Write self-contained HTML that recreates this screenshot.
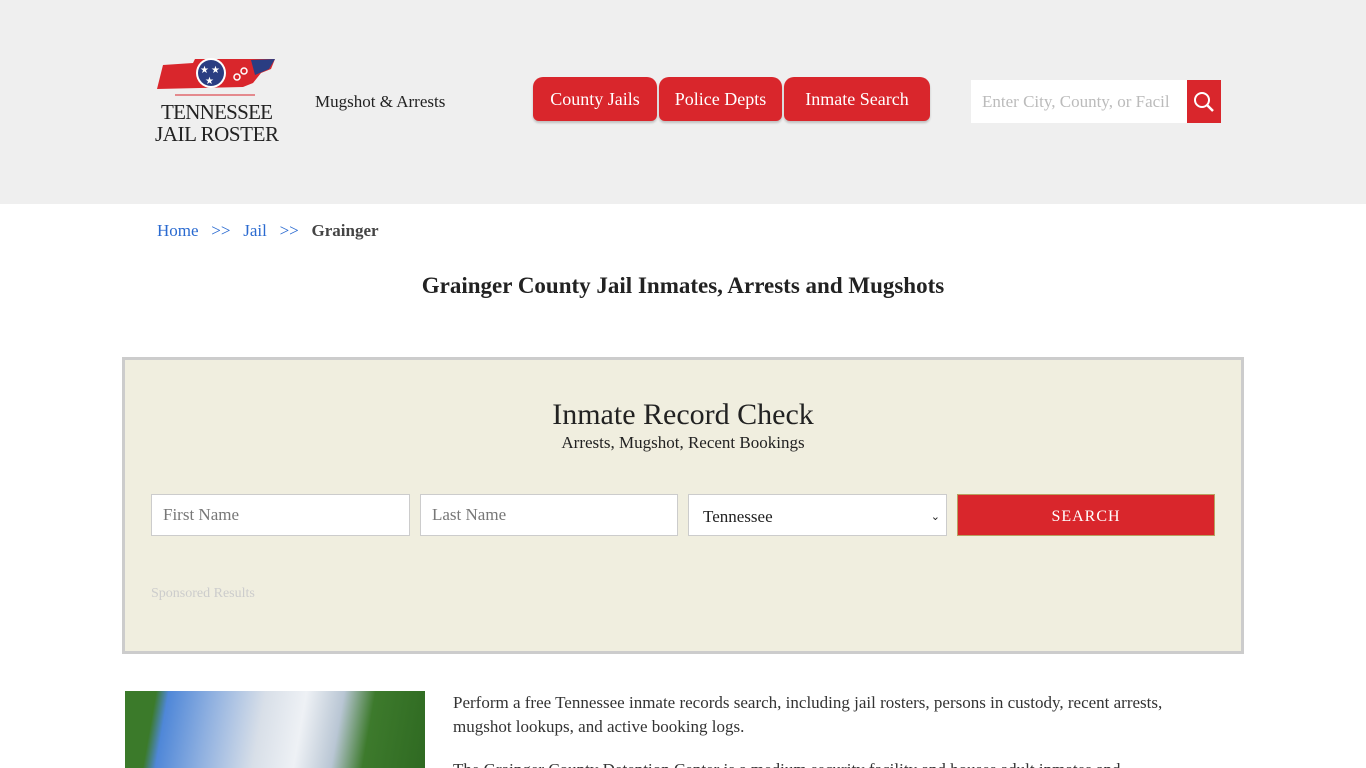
<!DOCTYPE html>
<html><head><meta charset="utf-8"><style>
*{box-sizing:border-box;margin:0;padding:0}
html,body{width:1366px;height:768px;overflow:hidden}
body{background:#fff;font-family:"Liberation Serif",serif;color:#222;position:relative}
.hdr{position:absolute;left:0;top:0;width:1366px;height:204px;background:#efefef}
.tag{position:absolute;left:315px;top:92px;font-size:17px;color:#222}
.nav a{position:absolute;top:77px;height:44px;background:#d9262c;color:#fff;font-size:18px;line-height:44px;text-align:center;border-radius:10px 10px 6px 6px;text-decoration:none;box-shadow:0 2px 2px rgba(0,0,0,.2)}
.sb{position:absolute;left:971px;top:80px;width:216px;height:43px;background:#fff;color:#bbb;font-size:17px;line-height:43px;padding-left:11px;white-space:nowrap;overflow:hidden}
.sbtn{position:absolute;left:1187px;top:80px;width:34px;height:43px;background:#d9262c}
.bc{position:absolute;left:157px;top:221px;font-size:17px;color:#2a6ad0}
.bc b{color:#444}
h1{position:absolute;left:0;width:1366px;top:273px;text-align:center;font-size:23px;font-weight:bold;color:#222}
.box{position:absolute;left:122px;top:357px;width:1122px;height:297px;background:#f0eedf;border:3px solid #ccc}
.box h2{position:absolute;top:38px;width:100%;text-align:center;font-weight:normal;font-size:30px}
.box .sub{position:absolute;top:73px;width:100%;text-align:center;font-size:17px}
.in{position:absolute;top:134px;height:42px;background:#fff;border:1px solid #ccc;font-size:17px;color:#777;line-height:40px;padding-left:11px}
.btn{position:absolute;left:832px;top:134px;width:258px;height:42px;background:#d9262c;color:#fff;text-align:center;line-height:44px;font-size:16px;letter-spacing:1px;border:1px solid #b8a060}
.sp{position:absolute;left:26px;top:226px;font-size:14px;color:#ccc}
.img{position:absolute;left:125px;top:691px;width:300px;height:77px;background:linear-gradient(100deg,#3b7a2a 0 10%,#4f87d8 14%,#8fb0e0 28%,#d8dfe8 45%,#eef1f5 58%,#b9c6d4 70%,#3d7a2c 80%,#2f6a22)}
.p{position:absolute;left:453px;font-size:17px;line-height:24px;color:#333;width:745px}
</style></head><body>
<div class="hdr"></div>
<svg style="position:absolute;left:153px;top:57px" width="130" height="90" viewBox="0 0 130 90">
<path d="M10 8 L40 6 L42 2 L122 2 L118 12 L108 16 L100 26 L90 30 L4 32 Z" fill="#d9262c"/>
<path d="M98 3 L122 2 L116 12 L102 18 Z" fill="#2a3d82"/>
<circle cx="58" cy="16" r="15" fill="#fff"/><circle cx="58" cy="16" r="13" fill="#2a3d82"/>
<text x="47" y="16" fill="#fff" font-size="10">★</text><text x="58" y="16" fill="#fff" font-size="10">★</text><text x="52" y="27" fill="#fff" font-size="10">★</text>
<circle cx="84" cy="20" r="3" fill="none" stroke="#fff" stroke-width="1.5"/><circle cx="91" cy="14" r="3" fill="none" stroke="#fff" stroke-width="1.5"/>
<line x1="22" y1="38" x2="102" y2="38" stroke="#d9262c" stroke-width="1"/>
<text x="64" y="62" text-anchor="middle" font-family="Liberation Serif" font-size="21" fill="#222" textLength="112">TENNESSEE</text>
<text x="64" y="84" text-anchor="middle" font-family="Liberation Serif" font-size="21" fill="#222" textLength="124">JAIL ROSTER</text>
</svg>
<div class="tag">Mugshot &amp; Arrests</div>
<div class="nav"><a style="left:533px;width:124px">County Jails</a><a style="left:659px;width:123px">Police Depts</a><a style="left:784px;width:146px">Inmate Search</a></div>
<div class="sb">Enter City, County, or Facil</div>
<div class="sbtn"><svg width="34" height="43"><circle cx="15" cy="20" r="7" fill="none" stroke="#fff" stroke-width="2"/><line x1="20" y1="25" x2="26" y2="31" stroke="#fff" stroke-width="2.5"/></svg></div>
<div class="bc">Home &nbsp;&nbsp;&gt;&gt;&nbsp;&nbsp; Jail &nbsp;&nbsp;&gt;&gt;&nbsp;&nbsp; <b>Grainger</b></div>
<h1>Grainger County Jail Inmates, Arrests and Mugshots</h1>
<div class="box">
<h2>Inmate Record Check</h2>
<div class="sub">Arrests, Mugshot, Recent Bookings</div>
<div class="in" style="left:26px;width:259px">First Name</div>
<div class="in" style="left:295px;width:258px">Last Name</div>
<div class="in" style="left:563px;width:259px;color:#222;line-height:44px;padding-left:14px">Tennessee<span style="position:absolute;right:6px;font-size:11px">⌄</span></div>
<div class="btn">SEARCH</div>
<div class="sp">Sponsored Results</div>
</div>
<div class="img"></div>
<div class="p" style="top:691px">Perform a free Tennessee inmate records search, including jail rosters, persons in custody, recent arrests, mugshot lookups, and active booking logs.</div>
<div class="p" style="top:758px;white-space:nowrap">The Grainger County Detention Center is a medium security facility and houses adult inmates and</div>
</body></html>
